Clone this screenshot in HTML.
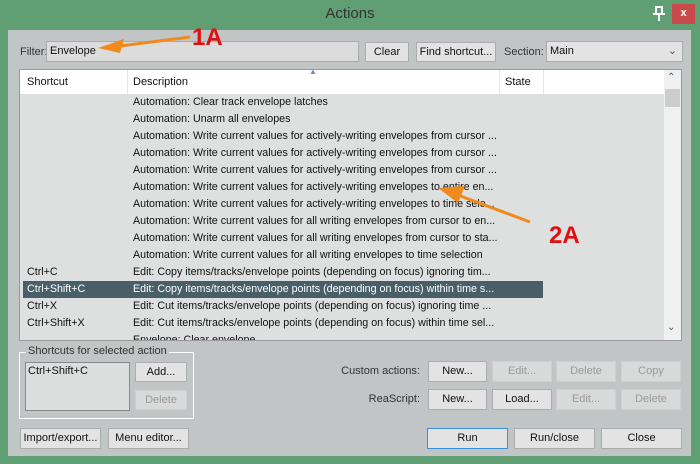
<!DOCTYPE html><html><head><style>
*{box-sizing:border-box;margin:0;padding:0}
body{width:700px;height:464px;background:#5f9f73;font-family:"Liberation Sans",sans-serif;font-size:10.7px;color:#111;position:relative;overflow:hidden}
.a{position:absolute}
.panel{left:8px;top:30px;width:683px;height:426px;background:#c2c5c5}
.btn{position:absolute;background:#e3e3e3;border:1px solid #acacac;text-align:center;line-height:18px;font-size:11px}
.dis{color:#9a9a9a;background:#d8d9d9;border-color:#cfcfcf}
.row{position:absolute;left:4px;height:17px;line-height:17px;width:520px;white-space:nowrap}
.row span{position:absolute}
</style></head><body>
<div class="a" style="left:0;top:5px;width:700px;text-align:center;font-size:15px;color:#333">Actions</div>
<svg class="a" style="left:651px;top:6px" width="16" height="16"><path d="M4 1h8M5 1v6M11 1v6M2 8h12M8 8v7" stroke="#fff" stroke-width="2" fill="none"/></svg>
<div class="a" style="left:672px;top:4px;width:23px;height:20px;background:#c94a4a;color:#fff;text-align:center;line-height:19px;font-size:11px;font-weight:bold">x</div>
<div class="a panel"></div>
<div class="a" style="left:20px;top:46px;font-size:11px;color:#333">Filter:</div>
<div class="a" style="left:46px;top:41px;width:313px;height:21px;background:#dcdcdc;border:1px solid #aaa;padding:3px 3px;font-size:11px">Envelope</div>
<div class="btn" style="left:365px;top:42px;width:44px;height:20px">Clear</div>
<div class="btn" style="left:416px;top:42px;width:80px;height:20px">Find shortcut...</div>
<div class="a" style="left:504px;top:46px;font-size:11px;color:#333">Section:</div>
<div class="a" style="left:546px;top:41px;width:137px;height:21px;background:#e3e3e3;border:1px solid #aaa;padding:3px 3px;font-size:11px">Main<span style="position:absolute;right:5px;top:2px;color:#555">&#8964;</span></div>
<div class="a" style="left:19px;top:69px;width:663px;height:272px;background:#dedfdf;border:1px solid #999"></div>
<div class="a" style="left:20px;top:70px;width:644px;height:24px;background:#fff"></div>
<div class="a" style="left:127px;top:70px;width:1px;height:24px;background:#e3e8ee"></div>
<div class="a" style="left:499px;top:70px;width:1px;height:24px;background:#e3e8ee"></div>
<div class="a" style="left:543px;top:70px;width:1px;height:24px;background:#e3e8ee"></div>
<div class="a" style="left:27px;top:76px;font-size:11px">Shortcut</div>
<div class="a" style="left:133px;top:76px;font-size:11px">Description</div>
<div class="a" style="left:505px;top:76px;font-size:11px">State</div>
<div class="a" style="left:309px;top:67px;font-size:8px;color:#6a8fb5">&#9650;</div>
<div class="a" style="left:664px;top:70px;width:17px;height:270px;background:#f0f0f0"></div>
<div class="a" style="left:665px;top:89px;width:15px;height:18px;background:#cdcdcd"></div>
<div class="a" style="left:667px;top:72px;font-size:10px;color:#555">&#8963;</div>
<div class="a" style="left:667px;top:322px;font-size:10px;color:#555">&#8964;</div>
<div class="a" style="left:19px;top:94px;width:645px;height:246px;overflow:hidden">
<div class="row" style="top:0"><span style="left:110px">Automation: Clear track envelope latches</span></div>
<div class="row" style="top:17px"><span style="left:110px">Automation: Unarm all envelopes</span></div>
<div class="row" style="top:34px"><span style="left:110px">Automation: Write current values for actively-writing envelopes from cursor ...</span></div>
<div class="row" style="top:51px"><span style="left:110px">Automation: Write current values for actively-writing envelopes from cursor ...</span></div>
<div class="row" style="top:68px"><span style="left:110px">Automation: Write current values for actively-writing envelopes from cursor ...</span></div>
<div class="row" style="top:85px"><span style="left:110px">Automation: Write current values for actively-writing envelopes to entire en...</span></div>
<div class="row" style="top:102px"><span style="left:110px">Automation: Write current values for actively-writing envelopes to time sele...</span></div>
<div class="row" style="top:119px"><span style="left:110px">Automation: Write current values for all writing envelopes from cursor to en...</span></div>
<div class="row" style="top:136px"><span style="left:110px">Automation: Write current values for all writing envelopes from cursor to sta...</span></div>
<div class="row" style="top:153px"><span style="left:110px">Automation: Write current values for all writing envelopes to time selection</span></div>
<div class="row" style="top:170px"><span style="left:4px">Ctrl+C</span><span style="left:110px">Edit: Copy items/tracks/envelope points (depending on focus) ignoring tim...</span></div>
<div class="row" style="top:187px;background:#485f68;color:#fff"><span style="left:4px">Ctrl+Shift+C</span><span style="left:110px">Edit: Copy items/tracks/envelope points (depending on focus) within time s...</span></div>
<div class="row" style="top:204px"><span style="left:4px">Ctrl+X</span><span style="left:110px">Edit: Cut items/tracks/envelope points (depending on focus) ignoring time ...</span></div>
<div class="row" style="top:221px"><span style="left:4px">Ctrl+Shift+X</span><span style="left:110px">Edit: Cut items/tracks/envelope points (depending on focus) within time sel...</span></div>
<div class="row" style="top:238px"><span style="left:110px">Envelope: Clear envelope</span></div>
</div>
<div class="a" style="left:19px;top:352px;width:175px;height:67px;border:1px solid #fff"></div>
<div class="a" style="left:26px;top:345px;background:#c2c5c5;padding:0 2px;font-size:11px;color:#333">Shortcuts for selected action</div>
<div class="a" style="left:25px;top:362px;width:105px;height:49px;background:#dcdddd;border:1px solid #888;padding:2px;font-size:11px">Ctrl+Shift+C</div>
<div class="btn" style="left:135px;top:362px;width:52px;height:20px">Add...</div>
<div class="btn dis" style="left:135px;top:390px;width:52px;height:20px">Delete</div>
<div class="a" style="left:300px;top:365px;width:120px;text-align:right;font-size:11px;color:#333">Custom actions:</div>
<div class="a" style="left:300px;top:393px;width:120px;text-align:right;font-size:11px;color:#333">ReaScript:</div>
<div class="btn" style="left:428px;top:361px;width:59px;height:21px">New...</div>
<div class="btn dis" style="left:492px;top:361px;width:60px;height:21px">Edit...</div>
<div class="btn dis" style="left:556px;top:361px;width:60px;height:21px">Delete</div>
<div class="btn dis" style="left:621px;top:361px;width:60px;height:21px">Copy</div>
<div class="btn" style="left:428px;top:389px;width:59px;height:21px">New...</div>
<div class="btn" style="left:492px;top:389px;width:60px;height:21px">Load...</div>
<div class="btn dis" style="left:556px;top:389px;width:60px;height:21px">Edit...</div>
<div class="btn dis" style="left:621px;top:389px;width:60px;height:21px">Delete</div>
<div class="btn" style="left:20px;top:428px;width:81px;height:21px">Import/export...</div>
<div class="btn" style="left:108px;top:428px;width:81px;height:21px">Menu editor...</div>
<div class="btn" style="left:427px;top:428px;width:81px;height:21px;border-color:#3b8fe0">Run</div>
<div class="btn" style="left:514px;top:428px;width:81px;height:21px">Run/close</div>
<div class="btn" style="left:601px;top:428px;width:81px;height:21px">Close</div>
<svg class="a" style="left:0;top:0" width="700" height="464">
<line x1="190" y1="37" x2="112" y2="47" stroke="#f08a1c" stroke-width="3"/>
<polygon points="98,48 124,39 120,53" fill="#f08a1c"/>
<line x1="530" y1="222" x2="455" y2="194" stroke="#f08a1c" stroke-width="3"/>
<polygon points="438,188 465,186 458,203" fill="#f08a1c"/>
<text x="192" y="45" font-family="Liberation Sans" font-weight="bold" font-size="24" fill="#e01010">1A</text>
<text x="549" y="243" font-family="Liberation Sans" font-weight="bold" font-size="24" fill="#e01010">2A</text>
</svg>
</body></html>
